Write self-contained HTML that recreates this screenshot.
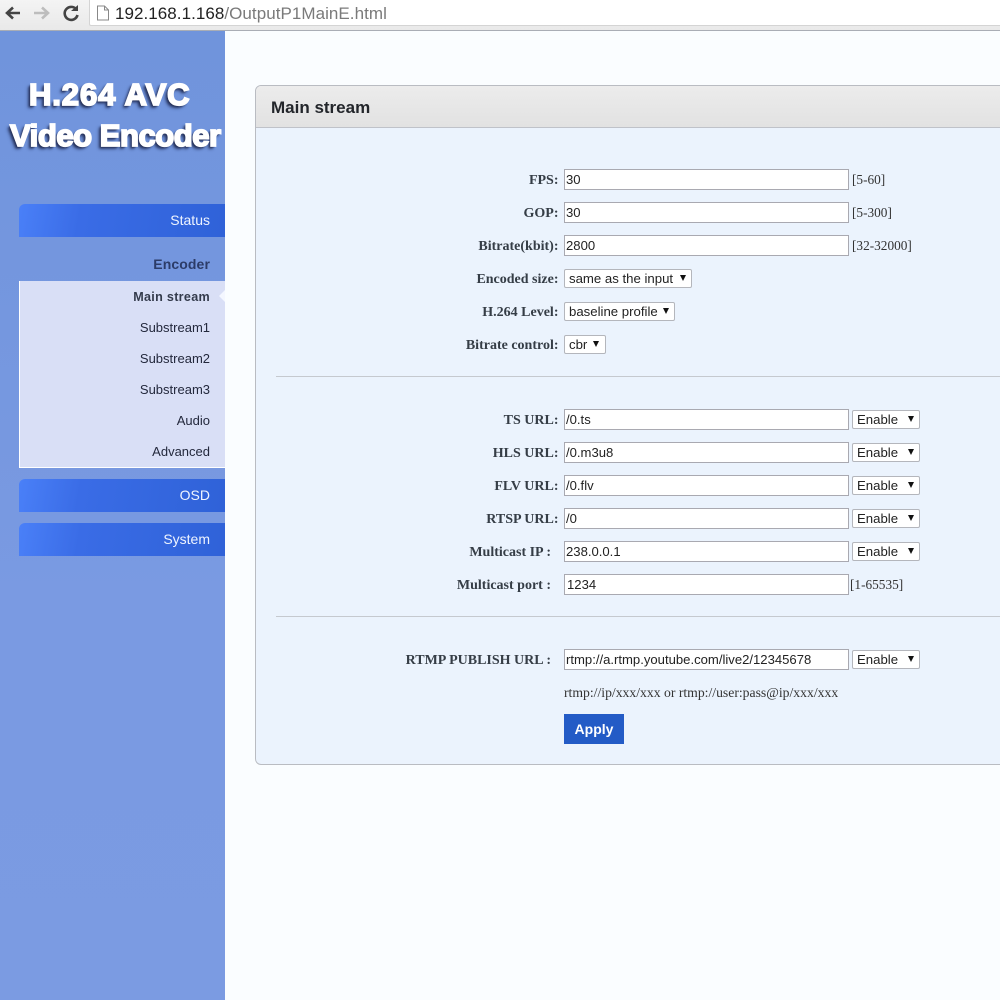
<!DOCTYPE html>
<html><head><meta charset="utf-8"><title>Main stream</title>
<style>
html,body{margin:0;padding:0}
body{width:1000px;height:1000px;overflow:hidden;position:relative;background:#fafdff;font-family:"Liberation Sans",sans-serif}
.a{position:absolute;white-space:nowrap}
#bar{left:0;top:0;width:1000px;height:30px;background:linear-gradient(#f4f4f4,#e9e9e9)}
#line{left:0;top:30px;width:1000px;height:1px;background:#a9adb5}
#url{left:89px;top:0;width:911px;height:25px;background:#fff;border:1px solid #d4d4d4;border-top:0;border-right:0;border-radius:0 0 0 2px}
#urltext{left:115px;top:2px;font-size:17px;line-height:23px;color:#7a7a7a;letter-spacing:.05px}
#urltext b{font-weight:normal;color:#222}
#side{left:0;top:31px;width:225px;height:969px;background:linear-gradient(#7094dc,#7a9ae2 60%,#7b9be2)}
.t{color:#fff;font-weight:bold;-webkit-text-stroke:1.8px #fff;text-shadow:-1px 1px 1px #222c50,-2px 2px 2px #26325c,-3px 3px 3px rgba(30,40,80,.6);transform-origin:0 0}
.nav{left:19px;width:206px;height:33px;border-radius:6px 0 0 0;background:linear-gradient(100deg,#4a80f8 0%,#3a6ce6 30%,#2f62d8 100%);color:#eef4ff;font-size:14px;line-height:33px;text-align:right}
.nav span{margin-right:15px}
#enc{right:790px;top:256px;font-size:14px;line-height:16px;font-weight:bold;color:#2c3c68;letter-spacing:.1px}
#sub{left:19px;top:281px;width:205px;height:186px;background:#d9dff6;border-left:1px solid #fff;border-bottom:1px solid #fff}
.si{right:790px;font-size:13px;line-height:16px;color:#23283c}
#tri{left:219px;top:290px;width:0;height:0;border:6px solid transparent;border-left:0;border-right:6px solid #f4f7ff}
#panel{left:255px;top:85px;width:760px;height:678px;box-sizing:content-box;border:1px solid #b9bcc2;border-radius:6px;background:#ebf3fd;overflow:hidden}
#head{left:0;top:0;width:760px;height:41px;background:linear-gradient(#ececec,#e2e2e2);border-bottom:1px solid #bfc2c9}
#head div{position:absolute;left:15px;top:12px;font-size:17px;line-height:20px;font-weight:bold;color:#23262b}
.hr{left:276px;width:724px;height:1px;background:#c5c9cf}
.l{right:441.5px;margin-top:2px;font:bold 14px/16px "Liberation Serif",serif;color:#353d46}
input{position:absolute;left:564px;width:285px;height:21px;box-sizing:border-box;margin:0;border:1px solid #a9a9b1;background:#fff;padding:0 1px 1px 1px;font:13.1px "Liberation Sans",sans-serif;color:#222;outline:0}
.s{left:564px;height:19px;box-sizing:border-box;border:1px solid #b4b6bc;border-radius:2px;background:#fff;font-size:13.2px;line-height:17px;color:#222;padding-left:4px}
.s i{position:absolute;top:5px;width:0;height:0;border-left:3.5px solid transparent;border-right:3.5px solid transparent;border-top:6.5px solid #111}
.e{left:852px;width:68px}
.e i{right:5px}
.h{font:13.3px/16px "Liberation Serif",serif;color:#333}
#apply{left:564px;top:714px;width:60px;height:30px;background:#235bc6;color:#fff;font-size:14px;font-weight:bold;line-height:30px;text-align:center}
</style></head><body>
<div class="a" id="bar"></div>
<svg class="a" style="left:0;top:0" width="90" height="30" viewBox="0 0 90 30">
<path d="M20 13H8M13 7.5L7 13l6 5.5" fill="none" stroke="#444" stroke-width="2.6"/>
<path d="M34 13h13M42 7.5l6 5.5-6 5.5" fill="none" stroke="#bdbdbd" stroke-width="2.6"/>
<path d="M76 9a6.5 6.5 0 1 0 1.5 6" fill="none" stroke="#444" stroke-width="2.6"/>
<path d="M71 11h7V5z" fill="#444"/>
</svg>
<div class="a" id="url"></div>
<svg class="a" style="left:96px;top:5px" width="14" height="16" viewBox="0 0 14 16"><path d="M1.5 1h7l4 4v10h-11zM8.5 1v4h4" fill="#fff" stroke="#888"/></svg>
<div class="a" id="urltext"><b>192.168.1.168</b>/OutputP1MainE.html</div>
<div class="a" id="line"></div>

<div class="a" id="side"></div>
<div class="a t" style="left:29px;top:77px;font-size:31px;line-height:36px;letter-spacing:.9px">H.264 AVC</div>
<div class="a t" style="left:10px;top:118px;font-size:31px;line-height:36px;letter-spacing:-.45px">Video Encoder</div>
<div class="a nav" style="top:204px"><span>Status</span></div>
<div class="a" id="enc">Encoder</div>
<div class="a" id="sub"></div>
<div class="a" id="tri"></div>
<div class="a si" style="top:289px;font-weight:bold;color:#343b4c;font-size:12.6px;letter-spacing:.3px">Main stream</div>
<div class="a si" style="top:320px">Substream1</div>
<div class="a si" style="top:351px">Substream2</div>
<div class="a si" style="top:382px">Substream3</div>
<div class="a si" style="top:413px">Audio</div>
<div class="a si" style="top:444px">Advanced</div>
<div class="a nav" style="top:479px"><span>OSD</span></div>
<div class="a nav" style="top:523px"><span>System</span></div>

<div class="a" id="panel"><div class="a" id="head"><div>Main stream</div></div></div>

<div class="a l" style="top:171px">FPS:</div><input style="top:169px" value="30"><div class="a h" style="left:852px;top:172px">[5-60]</div>
<div class="a l" style="top:204px">GOP:</div><input style="top:202px" value="30"><div class="a h" style="left:852px;top:205px">[5-300]</div>
<div class="a l" style="top:237px">Bitrate(kbit):</div><input style="top:235px" value="2800"><div class="a h" style="left:852px;top:238px">[32-32000]</div>
<div class="a l" style="top:270px">Encoded size:</div><div class="a s" style="top:269px;width:128px">same as the input<i style="right:5px"></i></div>
<div class="a l" style="top:303px">H.264 Level:</div><div class="a s" style="top:302px;width:111px">baseline profile<i style="right:5px"></i></div>
<div class="a l" style="top:336px">Bitrate control:</div><div class="a s" style="top:335px;width:42px">cbr<i style="right:6px"></i></div>
<div class="a hr" style="top:376px"></div>

<div class="a l" style="top:411px">TS URL:</div><input style="top:409px" value="/0.ts"><div class="a s e" style="top:410px">Enable<i></i></div>
<div class="a l" style="top:444px">HLS URL:</div><input style="top:442px" value="/0.m3u8"><div class="a s e" style="top:443px">Enable<i></i></div>
<div class="a l" style="top:477px">FLV URL:</div><input style="top:475px" value="/0.flv"><div class="a s e" style="top:476px">Enable<i></i></div>
<div class="a l" style="top:510px">RTSP URL:</div><input style="top:508px" value="/0"><div class="a s e" style="top:509px">Enable<i></i></div>
<div class="a l" style="top:543px;right:449px">Multicast IP :</div><input style="top:541px" value="238.0.0.1"><div class="a s e" style="top:542px">Enable<i></i></div>
<div class="a l" style="top:576px;right:449px">Multicast port :</div><input style="top:574px;padding-left:2px" value="1234"><div class="a h" style="left:850px;top:577px">[1-65535]</div>
<div class="a hr" style="top:616px"></div>

<div class="a l" style="top:651px;right:449px">RTMP PUBLISH URL :</div><input style="top:649px" value="rtmp://a.rtmp.youtube.com/live2/12345678"><div class="a s e" style="top:650px">Enable<i></i></div>
<div class="a h" style="left:564px;top:685px;font-size:13.7px">rtmp://ip/xxx/xxx or rtmp://user:pass@ip/xxx/xxx</div>
<div class="a" id="apply">Apply</div>
</body></html>
